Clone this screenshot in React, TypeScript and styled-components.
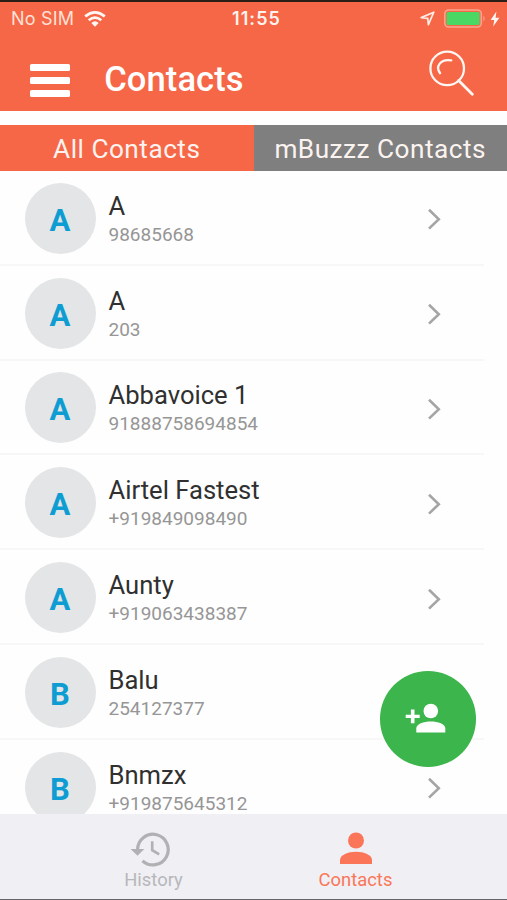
import React from "react";
import styled, { createGlobalStyle } from "styled-components";

const GlobalStyle = createGlobalStyle`
  * { box-sizing: border-box; }
  html, body { margin: 0; padding: 0; background: #fefefe; }
  body { font-family: Roboto, "Liberation Sans", sans-serif; }
  button { font: inherit; border: 0; padding: 0; background: none; }
`;

const Screen = styled.div`
  position: relative;
  width: 507px;
  height: 900px;
  display: flex;
  flex-direction: column;
  overflow: hidden;
  background: #fefefe;
  border-top: 2px solid #2b1d18;
  border-bottom: 1px solid #66666a;
`;

const StatusBar = styled.div`
  height: 33px;
  flex: none;
  display: grid;
  grid-template-columns: 1fr auto 1fr;
  align-items: center;
  padding: 0 7px 0 11px;
  background: #f66747;
  color: #fff3ee;
  font-family: Inter, sans-serif;
  font-size: 18px;
`;

const Carrier = styled.div`
  display: flex;
  align-items: center;
  gap: 10px;
  color: #ffe0d6;
  letter-spacing: 0.2px;
`;

const Clock = styled.div`
  font-weight: 600;
  letter-spacing: 1.1px;
  padding-left: 2px;
`;

const StatusIcons = styled.div`
  display: flex;
  align-items: center;
  justify-content: flex-end;
`;

const BatterySlot = styled.span`
  display: flex;
  margin: 0 3px 0 9px;
`;

const Header = styled.header`
  height: 76px;
  flex: none;
  display: flex;
  align-items: center;
  padding: 0 32px 0 30px;
  background: #f66747;
  color: #fff;
`;

const MenuButton = styled.button`
  width: 39.5px;
  height: 33px;
  margin-top: 14px;
  display: flex;
  flex-direction: column;
  justify-content: space-between;
`;

const MenuBar = styled.span`
  height: 7px;
  width: 100%;
  border-radius: 1.5px;
  background: #fff;
`;

const Title = styled.h1`
  margin: 11px auto 0 34.7px;
  font-size: 34.5px;
  line-height: 40px;
  font-weight: 500;
  letter-spacing: 0.1px;
`;

const SearchButton = styled.button`
  width: 46px;
  height: 46px;
  display: flex;
`;

const Tabs = styled.div`
  height: 46.5px;
  margin-top: 13.5px;
  flex: none;
  display: flex;
`;

const Tab = styled.button<{ $active?: boolean }>`
  flex: 1;
  background: ${(p) => (p.$active ? "#f66747" : "#7f7f7f")};
  color: #fbf3f0;
  font-size: 26.2px;
  line-height: 44px;
  letter-spacing: 0.5px;
  padding-top: 2px;
  white-space: nowrap;
`;

const List = styled.ul`
  flex: 1;
  min-height: 0;
  margin: 0;
  padding: 0;
  list-style: none;
  overflow: hidden;
`;

const Row = styled.li`
  height: 94.8px;
  width: 484px;
  display: flex;
  align-items: center;
  border-bottom: 2px solid #f7f7f8;
  padding: 0 42px 0 24.5px;
`;

const Avatar = styled.div`
  width: 71px;
  height: 71px;
  flex: none;
  margin-top: 2px;
  border-radius: 50%;
  background: #e3e5e6;
  color: #0e9dd3;
  display: flex;
  align-items: center;
  justify-content: center;
  font-size: 31px;
  font-weight: 700;
  padding-top: 4px;
`;

const Details = styled.div`
  flex: 1;
  margin: 2px 0 0 13px;
`;

const Name = styled.div`
  color: #303030;
  font-size: 25.6px;
  line-height: 32px;
`;

const Phone = styled.div`
  color: #969696;
  font-size: 19px;
  line-height: 25px;
`;

const RowArrow = styled.span`
  display: flex;
  margin-top: 4px;
`;

const TabBar = styled.nav`
  height: 85px;
  flex: none;
  display: grid;
  grid-template-columns: 307px 97px;
  background: #efeff4;
`;

const NavItem = styled.button<{ $active?: boolean }>`
  display: flex;
  flex-direction: column;
  align-items: center;
  padding-top: 17px;
  color: ${(p) => (p.$active ? "#fb7658" : "#b7b7ba")};
  font-size: 18.4px;
  line-height: 24px;
`;

const NavIcon = styled.span`
  height: 37px;
  display: flex;
`;

const HistorySlot = styled(NavIcon)`
  margin-right: 7px;
`;

const AddButton = styled.button`
  position: absolute;
  right: 31.5px;
  bottom: 132.5px;
  width: 95.5px;
  height: 95.5px;
  border-radius: 50%;
  background: #3cb54c;
  display: flex;
  align-items: center;
  justify-content: center;
  padding: 0 4px 1px 0;
`;

const contacts = [
  { name: "A", phone: "98685668" },
  { name: "A", phone: "203" },
  { name: "Abbavoice 1", phone: "91888758694854" },
  { name: "Airtel Fastest", phone: "+919849098490" },
  { name: "Aunty", phone: "+919063438387" },
  { name: "Balu", phone: "254127377" },
  { name: "Bnmzx", phone: "+919875645312" },
];

const WifiIcon = () => (
  <svg width="22" height="16" viewBox="0 0 22 16" fill="none" stroke="#fff7f3" strokeWidth="2.7">
    <path d="M1.2 5.4Q11-2.6 20.8 5.4" />
    <path d="M4.7 9.2Q11 3.9 17.3 9.2" />
    <path d="M11 15.7 7.3 11.9Q11 8.8 14.7 11.9Z" fill="#fff7f3" stroke="none" />
  </svg>
);

const LocationIcon = () => (
  <svg width="15" height="15" viewBox="0 0 15 15" fill="none" stroke="#ffece5" strokeWidth="1.7" strokeLinejoin="round">
    <path d="M1.2 6.6 13.8 1.2 8.4 13.6 7.7 7.3Z" />
  </svg>
);

const BatteryIcon = () => (
  <svg width="43" height="19" viewBox="0 0 43 19">
    <rect x="0.8" y="1" width="36.5" height="17" rx="4" fill="none" stroke="#fba48e" strokeWidth="1.6" />
    <rect x="2.6" y="3" width="33" height="13" rx="1.5" fill="#4bd763" />
    <path d="M39.4 6.5q2.6 3 0 6z" fill="#fba48e" />
  </svg>
);

const BoltIcon = () => (
  <svg width="10" height="16" viewBox="0 0 10 16" fill="#fff5f1">
    <path d="M6.4.5.6 8.9h3.6L3.2 15.5 9.4 6.8H5.6Z" />
  </svg>
);

const SearchIcon = () => (
  <svg width="46" height="46" viewBox="0 0 46 46" fill="none" stroke="#fff5f1" strokeWidth="2.3" strokeLinecap="round">
    <circle cx="18.2" cy="18.4" r="16.8" />
    <path d="M11.1 23.2C6 16.5 11.5 8.6 22.3 10.4" />
    <path d="M29.6 30.6 43.3 44.2" strokeWidth="2.8" />
  </svg>
);

const Chevron = () => (
  <svg width="15" height="22" viewBox="0 0 15 22" fill="none" stroke="#a5a5a5" strokeWidth="2.6">
    <path d="M2 1.8 11.8 11.2 2 20.6" />
  </svg>
);

const AddPersonIcon = () => (
  <svg width="41" height="30" viewBox="0 0 41 30" fill="#fff">
    <circle cx="25.8" cy="8" r="7.3" />
    <path d="M11.3 29.4V25.3C11.3 20.8 18.6 18.4 25.8 18.4S40.3 20.8 40.3 25.3V29.4Z" />
    <path d="M5.9 6.5h3.6v5.2h5.2v3.4H9.5v5.2H5.9v-5.2H.7v-3.4h5.2Z" />
  </svg>
);

const HistoryIcon = () => (
  <svg width="40" height="37" viewBox="0 0 40 37" fill="none" stroke="#b1b1b4" strokeWidth="3.2">
    <path d="M7.6 20.5V18.5A15.3 15.3 0 1 1 12.5 29.8" />
    <path d="M.6 18H14.3L7.5 24.8Z" fill="#b1b1b4" stroke="none" />
    <path d="M22.2 10.3V19.2L29.2 23.3" strokeWidth="2.6" />
  </svg>
);

const PersonIcon = () => (
  <svg width="34" height="34" viewBox="0 0 34 34" fill="#fb7658">
    <circle cx="17" cy="9.5" r="8" />
    <path d="M1 33V29C1 24 9 20.8 17 20.8S33 24 33 29V33Z" />
  </svg>
);

export default function App() {
  return (
    <>
      <GlobalStyle />
      <Screen>
        <StatusBar>
          <Carrier>
            No SIM
            <WifiIcon />
          </Carrier>
          <Clock>11:55</Clock>
          <StatusIcons>
            <LocationIcon />
            <BatterySlot>
              <BatteryIcon />
            </BatterySlot>
            <BoltIcon />
          </StatusIcons>
        </StatusBar>
        <Header>
          <MenuButton aria-label="Menu">
            <MenuBar />
            <MenuBar />
            <MenuBar />
          </MenuButton>
          <Title>Contacts</Title>
          <SearchButton aria-label="Search">
            <SearchIcon />
          </SearchButton>
        </Header>
        <Tabs>
          <Tab $active>All Contacts</Tab>
          <Tab>mBuzzz Contacts</Tab>
        </Tabs>
        <List>
          {contacts.map((contact) => (
            <Row key={contact.phone}>
              <Avatar>{contact.name[0]}</Avatar>
              <Details>
                <Name>{contact.name}</Name>
                <Phone>{contact.phone}</Phone>
              </Details>
              <RowArrow>
                <Chevron />
              </RowArrow>
            </Row>
          ))}
        </List>
        <TabBar>
          <NavItem>
            <HistorySlot>
              <HistoryIcon />
            </HistorySlot>
            History
          </NavItem>
          <NavItem $active>
            <NavIcon>
              <PersonIcon />
            </NavIcon>
            Contacts
          </NavItem>
        </TabBar>
        <AddButton aria-label="Add contact">
          <AddPersonIcon />
        </AddButton>
      </Screen>
    </>
  );
}
